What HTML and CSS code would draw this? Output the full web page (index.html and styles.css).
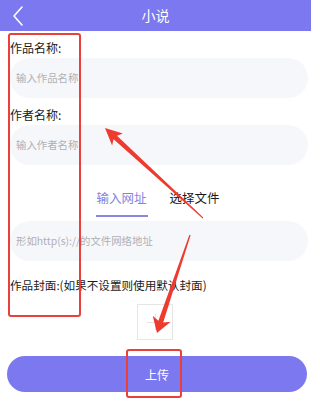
FILE: index.html
```html
<!DOCTYPE html>
<html lang="zh">
<head>
<meta charset="utf-8">
<title>小说</title>
<link rel="stylesheet" href="styles.css">
</head>
<body>
<div class="page">
  <header class="topbar">
    <svg class="back" width="12" height="20" viewBox="0 0 12 20"><path d="M10 1 L2 10 L10 19" fill="none" stroke="#fff" stroke-width="1.6" stroke-linecap="round" stroke-linejoin="round"/></svg>
    <div class="title">小说</div>
  </header>
  <main class="form">
    <div class="label first">作品名称:</div>
    <div class="input">输入作品名称</div>
    <div class="label second">作者名称:</div>
    <div class="input">输入作者名称</div>
    <div class="tabs">
      <div class="tab active">输入网址</div>
      <div class="tab">选择文件</div>
    </div>
    <div class="input">形如http(s)://的文件网络地址</div>
    <div class="label cover-label">作品封面:(如果不设置则使用默认封面)</div>
    <div class="cover"><span class="plus"></span></div>
    <button class="submit">上传</button>
  </main>
  <div class="mark mark-left"></div>
  <div class="mark mark-btn"></div>
  <svg class="arrows" width="311" height="406" viewBox="0 0 311 406">
    <polygon fill="#ee3b30" points="105,128 122.9,133.6 117,135.7 203.3,217.6 202.7,218.4 113.6,139.3 112.1,145.4"/>
    <polygon fill="#ee3b30" points="157,333 152.7,315.8 158.4,320.8 189.4,234.8 190.6,235.2 163.2,322.4 170.7,321.8"/>
  </svg>
</div>
</body>
</html>
```
FILE: styles.css
```css
* { box-sizing: border-box; }
html, body { margin: 0; padding: 0; background: #fff; }
body {
  font-family: "Noto Sans CJK SC", "Noto Sans", sans-serif;
  color: #222;
}
.page { position: relative; width: 311px; height: 406px; overflow: hidden; }
.topbar {
  height: 31px;
  background: #7b78f0;
  display: flex;
  align-items: center;
  justify-content: center;
  position: relative;
}
.back { position: absolute; left: 12px; top: 6px; }
.title { color: #fff; font-size: 14px; line-height: 31px; }
.form { display: flex; flex-direction: column; padding: 0 3px 0 10px; }
.label { font-size: 12px; line-height: 16px; color: #1a1a1a; }
.label.first { margin-top: 9px; }
.label.second { margin-top: 9px; }
.input {
  height: 40px;
  margin-top: 2px;
  border-radius: 20px;
  background: #f6f7fb;
  color: #b0b0b4;
  font-size: 10.4px;
  line-height: 40px;
  padding-left: 6px;
}
.tabs {
  display: flex;
  justify-content: center;
  gap: 21px;
  margin-top: 18px;
  padding-right: 2px;
  height: 34px;
}
.tab { font-size: 12.5px; line-height: 30px; height: 34px; color: #1a1a1a; }
.tab.active { color: #8583e0; border-bottom: 2px solid #8a87e0; width: 52px; }
.tabs + .input { margin-top: 4px; }
.cover-label { margin-top: 16px; font-size: 11.6px; }
.cover {
  align-self: center;
  width: 36px;
  height: 36px;
  margin-top: 11px;
  margin-right: 9px;
  border: 1px solid #e6e6e6;
  position: relative;
}
.plus::before, .plus::after {
  content: "";
  position: absolute;
  background: #e2e2e2;
}
.plus::before { left: 9px; right: 9px; top: 17px; height: 1px; }
.plus::after { top: 9px; bottom: 9px; left: 17px; width: 1px; }
.submit {
  margin: 16px 0 0 -3px;
  width: 300px;
  height: 36px;
  border: 0;
  border-radius: 18px;
  background: #7b78f0;
  color: #fff;
  font-family: inherit;
  font-size: 12px;
}
.mark {
  position: absolute;
  border: 2px solid #ea3f3a;
  border-radius: 3px;
}
.mark-left { left: 8px; top: 33px; width: 73px; height: 284px; }
.mark-btn { left: 126px; top: 349px; width: 56px; height: 49px; }
.arrows { position: absolute; left: 0; top: 0; pointer-events: none; }
```
